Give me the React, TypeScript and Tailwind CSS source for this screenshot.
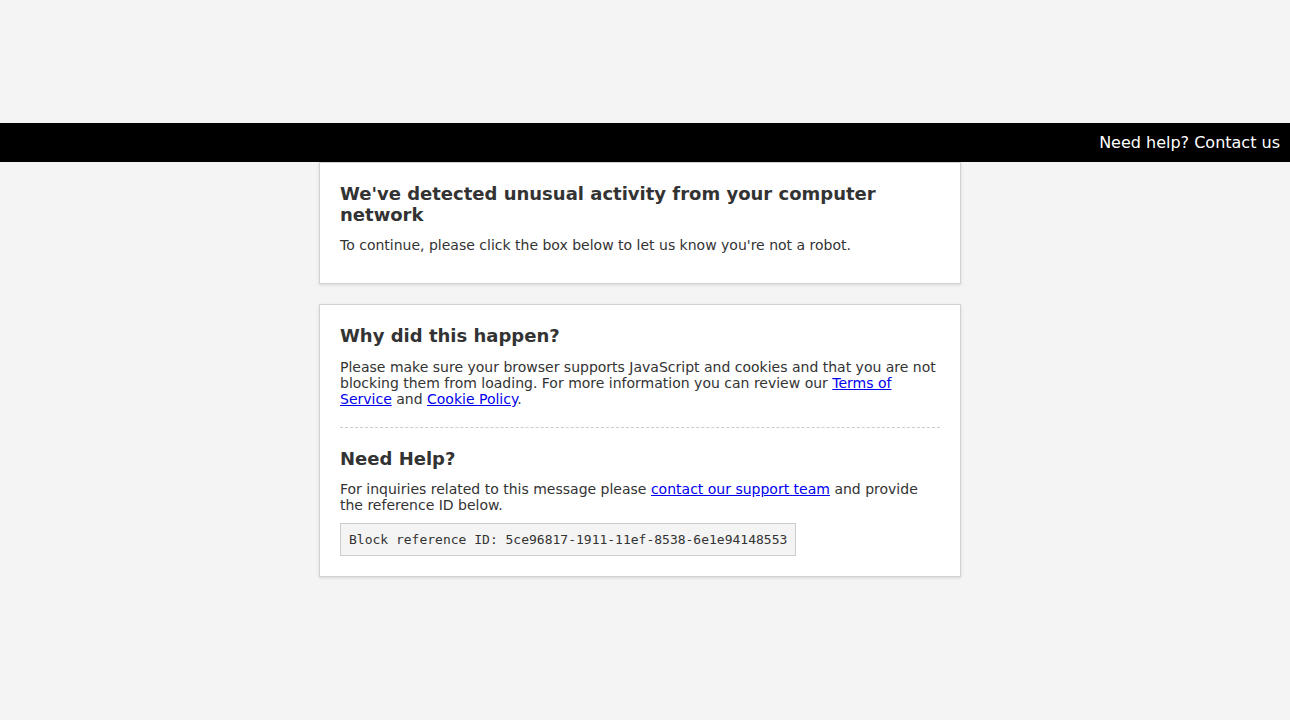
export default function App() {
  return (
    <div className="min-h-screen bg-[#f4f4f4] text-[#333] font-['DejaVu_Sans',sans-serif]">
      <div className="h-[123px]" />

      {/* Top bar */}
      <div className="h-[39px] bg-black flex items-center justify-end px-[10px]">
        <a className="text-white text-[16px]">Need help? Contact us</a>
      </div>

      <div className="pr-[10px]">
        <div className="w-[642px] mx-auto flex flex-col gap-[20px]">
          {/* Message card */}
          <div className="bg-white border border-[#d2d2d2] shadow-[0_1px_3px_rgba(0,0,0,0.12)] p-[20px]">
            <h1 className="text-[18px] leading-[21px] font-bold mb-[12px]">
              We've detected unusual activity from your computer network
            </h1>
            <p className="text-[14px] leading-[16px] mb-[10px]">
              To continue, please click the box below to let us know you're not a robot.
            </p>
          </div>

          {/* Details card */}
          <div className="bg-white border border-[#d2d2d2] shadow-[0_1px_3px_rgba(0,0,0,0.12)] p-[20px]">
            <h2 className="text-[18px] leading-[21px] font-bold mb-[13px]">Why did this happen?</h2>
            <p className="text-[14px] leading-[16px]">
              Please make sure your browser supports JavaScript and cookies and that you are not
              blocking them from loading. For more information you can review our{' '}
              <a className="text-[#0000ee] underline">Terms of Service</a> and{' '}
              <a className="text-[#0000ee] underline">Cookie Policy</a>.
            </p>

            <div className="border-t border-dashed border-[#ccc] my-[20px]" />

            <h2 className="text-[18px] leading-[21px] font-bold mb-[12px]">Need Help?</h2>
            <p className="text-[14px] leading-[16px]">
              For inquiries related to this message please{' '}
              <a className="text-[#0000ee] underline">contact our support team</a> and provide
              the reference ID below.
            </p>
            <div className="mt-[10px] inline-block bg-[#f4f4f4] border border-[#ccc] px-[8px] py-[8px] font-['DejaVu_Sans_Mono',monospace] text-[13px] leading-[15px]">
              Block reference ID: 5ce96817-1911-11ef-8538-6e1e94148553
            </div>
          </div>
        </div>
      </div>
    </div>
  );
}
